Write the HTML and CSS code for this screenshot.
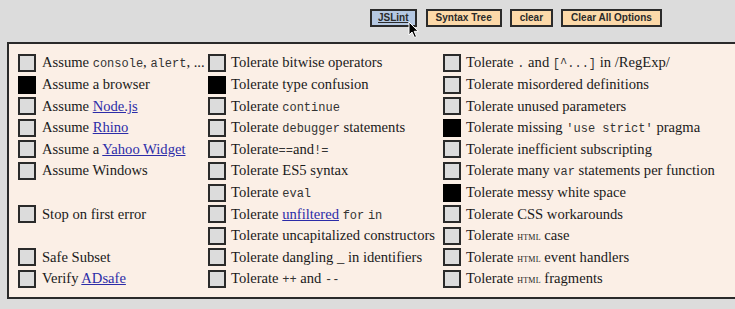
FILE: index.html
```html
<!DOCTYPE html>
<html>
<head>
<meta charset="utf-8">
<link rel="stylesheet" href="styles.css">
</head>
<body>
<div class="toolbar">
  <button class="btn btn-primary"><span class="u">JSLint</span></button>
  <button class="btn">Syntax Tree</button>
  <button class="btn">clear</button>
  <button class="btn">Clear All Options</button>
  <svg class="cursor" width="12" height="18" viewBox="0 0 12 18"><path d="M1 1 L1 14 L4 11 L6.5 16.5 L8.5 15.6 L6.2 10.3 L10.2 10.3 Z" fill="#000" stroke="#fff" stroke-width="1" stroke-linejoin="round"/></svg>
</div>
<div class="options">
  <div class="col col-1">
    <label class="opt"><input type="checkbox"><span>Assume <code>console</code>, <code>alert</code>, ...</span></label>
    <label class="opt"><input type="checkbox" checked><span>Assume a browser</span></label>
    <label class="opt"><input type="checkbox"><span>Assume <a href="#">Node.js</a></span></label>
    <label class="opt"><input type="checkbox"><span>Assume <a href="#">Rhino</a></span></label>
    <label class="opt"><input type="checkbox"><span>Assume a <a href="#">Yahoo Widget</a></span></label>
    <label class="opt"><input type="checkbox"><span>Assume Windows</span></label>
    <div class="opt"></div>
    <label class="opt"><input type="checkbox"><span>Stop on first error</span></label>
    <div class="opt"></div>
    <label class="opt"><input type="checkbox"><span>Safe Subset</span></label>
    <label class="opt"><input type="checkbox"><span>Verify <a href="#">ADsafe</a></span></label>
  </div>
  <div class="col col-2">
    <label class="opt"><input type="checkbox"><span>Tolerate bitwise operators</span></label>
    <label class="opt"><input type="checkbox" checked><span>Tolerate type confusion</span></label>
    <label class="opt"><input type="checkbox"><span>Tolerate <code>continue</code></span></label>
    <label class="opt"><input type="checkbox"><span>Tolerate <code>debugger</code> statements</span></label>
    <label class="opt"><input type="checkbox"><span>Tolerate<code>==</code>and<code>!=</code></span></label>
    <label class="opt"><input type="checkbox"><span>Tolerate ES5 syntax</span></label>
    <label class="opt"><input type="checkbox"><span>Tolerate <code>eval</code></span></label>
    <label class="opt"><input type="checkbox"><span>Tolerate <a href="#">unfiltered</a> <code>for</code> <code>in</code></span></label>
    <label class="opt"><input type="checkbox"><span>Tolerate uncapitalized constructors</span></label>
    <label class="opt"><input type="checkbox"><span>Tolerate dangling _ in identifiers</span></label>
    <label class="opt"><input type="checkbox"><span>Tolerate <code>++</code> and <code>--</code></span></label>
  </div>
  <div class="col col-3">
    <label class="opt"><input type="checkbox"><span>Tolerate <code>.</code> and <code>[^...]</code> in /RegExp/</span></label>
    <label class="opt"><input type="checkbox"><span>Tolerate misordered definitions</span></label>
    <label class="opt"><input type="checkbox"><span>Tolerate unused parameters</span></label>
    <label class="opt"><input type="checkbox" checked><span>Tolerate missing <code>'use strict'</code> pragma</span></label>
    <label class="opt"><input type="checkbox"><span>Tolerate inefficient subscripting</span></label>
    <label class="opt"><input type="checkbox"><span>Tolerate many <code>var</code> statements per function</span></label>
    <label class="opt"><input type="checkbox" checked><span>Tolerate messy white space</span></label>
    <label class="opt"><input type="checkbox"><span>Tolerate CSS workarounds</span></label>
    <label class="opt"><input type="checkbox"><span>Tolerate <abbr>html</abbr> case</span></label>
    <label class="opt"><input type="checkbox"><span>Tolerate <abbr>html</abbr> event handlers</span></label>
    <label class="opt"><input type="checkbox"><span>Tolerate <abbr>html</abbr> fragments</span></label>
  </div>
</div>
</body>
</html>
```

FILE: styles.css
```css
html, body {
  margin: 0;
  padding: 0;
}
body {
  background: #dcdcdc;
  width: 735px;
  height: 309px;
  overflow: hidden;
  font-family: "Liberation Serif", "Times New Roman", serif;
  color: #1a1a1a;
}
.toolbar {
  position: relative;
  height: 42px;
  box-sizing: border-box;
  padding: 9px 0 0 370px;
  display: flex;
  align-items: flex-start;
  gap: 8px;
}
.btn {
  height: 18px;
  box-sizing: border-box;
  margin: 0;
  padding: 0 8px;
  border: 2px solid #2b2b2b;
  background: #fcd9a9;
  font-family: "Liberation Sans", Arial, sans-serif;
  font-weight: bold;
  font-size: 10px;
  line-height: 14px;
  color: #2a2a2a;
  border-radius: 0;
}
.btn-primary {
  background: #b5c8e2;
  padding: 0 6px;
  margin-right: 1px;
}
.btn-primary .u {
  text-decoration: underline;
}
.cursor {
  position: absolute;
  left: 408px;
  top: 21px;
}
.options {
  width: 740px;
  margin-left: 7px;
  box-sizing: border-box;
  height: 257px;
  border: 2px solid #2a2a2a;
  border-right: none;
  background: #fbefe6;
  padding: 8.2px 0 0 9px;
  display: flex;
}
.col {
  display: flex;
  flex-direction: column;
}
.col-1 { width: 190px; }
.col-2 { width: 235px; }
.col-3 { flex: 1; }
.opt {
  height: 21.6px;
  display: flex;
  align-items: center;
  gap: 5px;
  font-size: 14.6px;
  white-space: nowrap;
}
.opt input {
  appearance: none;
  -webkit-appearance: none;
  margin: 0;
  width: 18px;
  height: 18px;
  flex: none;
  box-sizing: border-box;
  border: 2px solid #2a2a2a;
  background: #dcdcdc;
}
.opt input:checked {
  background: #000;
  border-color: #000;
}
.col-1 .opt { gap: 6px; }
code {
  font-family: "Liberation Mono", "Courier New", monospace;
  font-size: 12px;
  color: #333;
}
abbr {
  font-variant: small-caps;
  font-size: 12px;
  text-decoration: none;
  letter-spacing: 0.2px;
}
a {
  color: #2c2ca8;
  text-decoration: underline;
}
```
